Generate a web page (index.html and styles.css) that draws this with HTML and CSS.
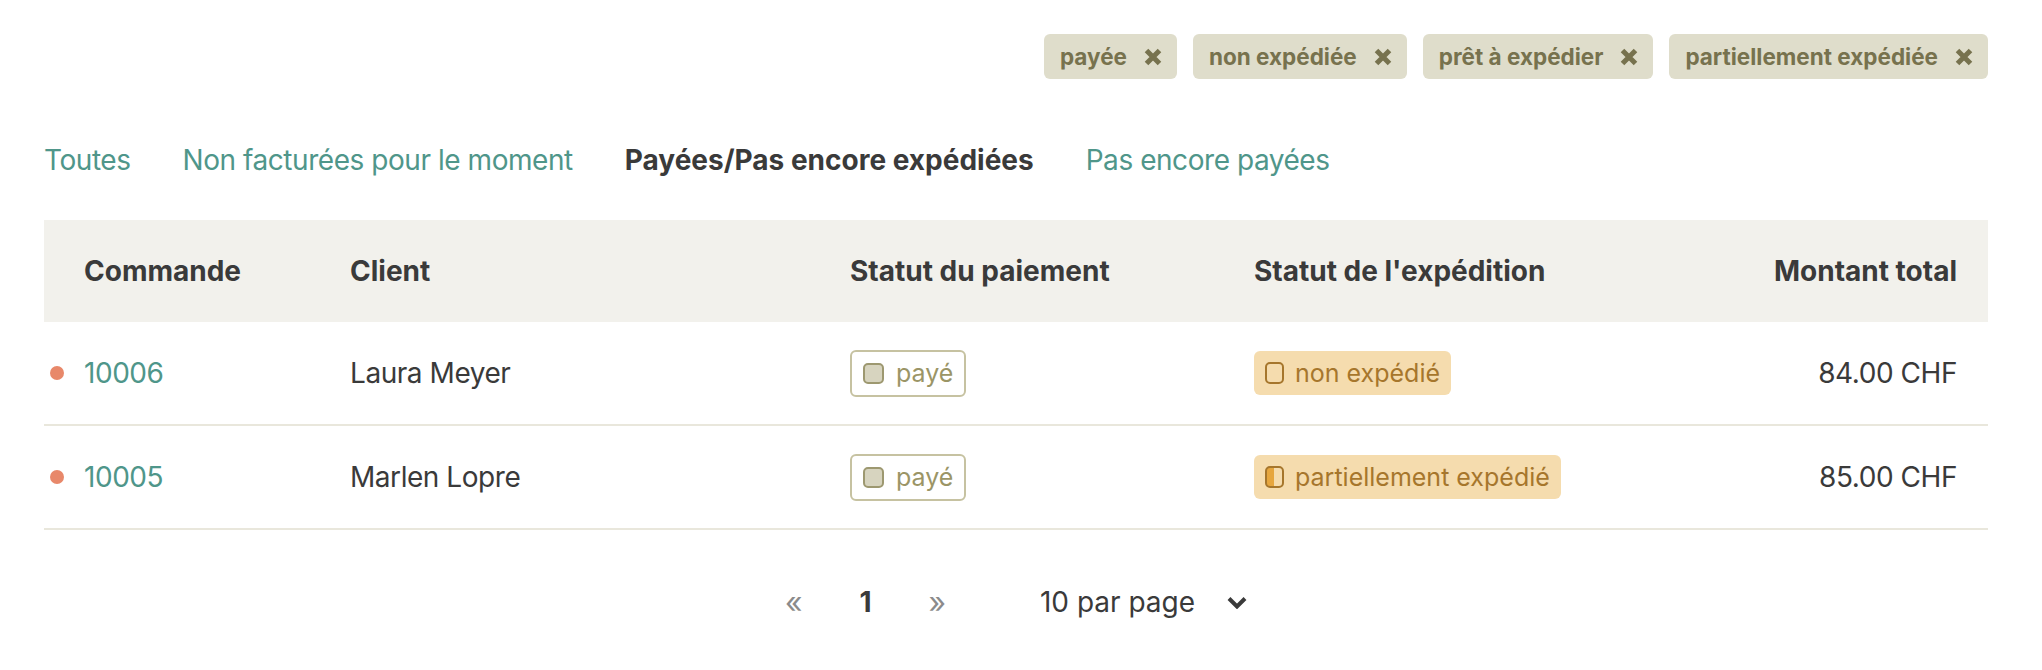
FILE: index.html
```html
<!DOCTYPE html>
<html lang="fr">
<head>
<meta charset="utf-8">
<title>Commandes</title>
<link rel="stylesheet" href="styles.css">
</head>
<body>
<div class="page">
  <div class="filters">
    <span class="chip">payée <svg class="x" viewBox="0 0 18 18"><path d="M2.5 2.5L15.5 15.5M15.5 2.5L2.5 15.5"/></svg></span>
    <span class="chip">non expédiée <svg class="x" viewBox="0 0 18 18"><path d="M2.5 2.5L15.5 15.5M15.5 2.5L2.5 15.5"/></svg></span>
    <span class="chip">prêt à expédier <svg class="x" viewBox="0 0 18 18"><path d="M2.5 2.5L15.5 15.5M15.5 2.5L2.5 15.5"/></svg></span>
    <span class="chip">partiellement expédiée <svg class="x" viewBox="0 0 18 18"><path d="M2.5 2.5L15.5 15.5M15.5 2.5L2.5 15.5"/></svg></span>
  </div>

  <nav class="tabs">
    <a class="tab" href="#">Toutes</a>
    <a class="tab" href="#">Non facturées pour le moment</a>
    <a class="tab active" href="#">Payées/Pas encore expédiées</a>
    <a class="tab" href="#">Pas encore payées</a>
  </nav>

  <div class="table">
    <div class="row head">
      <div class="cell">Commande</div>
      <div class="cell">Client</div>
      <div class="cell">Statut du paiement</div>
      <div class="cell">Statut de l'expédition</div>
      <div class="cell amount">Montant total</div>
    </div>
    <div class="row">
      <div class="cell order"><span class="dot"></span><a class="num" href="#">10006</a></div>
      <div class="cell">Laura Meyer</div>
      <div class="cell"><span class="badge paid"><span class="ico ico-paid"></span>payé</span></div>
      <div class="cell"><span class="badge ship"><span class="ico ico-ship"></span>non expédié</span></div>
      <div class="cell amount">84.00 CHF</div>
    </div>
    <div class="row">
      <div class="cell order"><span class="dot"></span><a class="num" href="#">10005</a></div>
      <div class="cell">Marlen Lopre</div>
      <div class="cell"><span class="badge paid"><span class="ico ico-paid"></span>payé</span></div>
      <div class="cell"><span class="badge ship"><span class="ico ico-ship half"></span>partiellement expédié</span></div>
      <div class="cell amount">85.00 CHF</div>
    </div>
  </div>

  <div class="pager">
    <span class="pg-arrow">«</span>
    <span class="pg-current">1</span>
    <span class="pg-arrow">»</span>
    <span class="per-page">10 par page</span>
    <svg class="chev" viewBox="0 0 20 13"><path d="M2 2.5L10 10.5L18 2.5"/></svg>
  </div>
</div>
</body>
</html>
```

FILE: styles.css
```css
* { box-sizing: content-box; }
body {
  margin: 0;
  background: #ffffff;
  color: #3a3a3a;
  font-family: Inter, "Noto Sans", "Liberation Sans", sans-serif;
}
.page {
  padding: 34px 54px 40px 44px;
}

/* filter chips */
.filters {
  display: flex;
  justify-content: flex-end;
  gap: 16px;
}
.chip {
  display: inline-flex;
  align-items: center;
  gap: 17px;
  height: 45px;
  padding: 0 15px 0 16px;
  border-radius: 6px;
  background: #dfddcb;
  color: #77724e;
  font-size: 22.5px;
  font-weight: 700;
}
.chip .x {
  width: 18px;
  height: 18px;
  fill: none;
  stroke: #77724e;
  stroke-width: 5;
}

/* tabs */
.tabs {
  display: flex;
  gap: 52px;
  margin-top: 64px;
  font-size: 28px;
  line-height: 34px;
}
.tab {
  color: #4f968a;
  text-decoration: none;
  letter-spacing: -0.45px;
}
.tab.active {
  color: #3a3a3a;
  font-weight: 700;
  letter-spacing: 0;
}

/* table */
.table {
  margin-top: 43px;
}
.row {
  display: grid;
  grid-template-columns: 266px 500px 404px 400px 1fr;
  align-items: center;
  height: 102px;
  border-bottom: 2px solid #e9e7dc;
  font-size: 28px;
  line-height: 34px;
  letter-spacing: -0.45px;
}
.row.head {
  background: #f2f1ec;
  font-weight: 700;
  border-bottom: 0;
  letter-spacing: 0;
}
.cell {
  padding-left: 40px;
  white-space: nowrap;
}
.cell.amount {
  padding-left: 0;
  padding-right: 31px;
  text-align: right;
}
.cell.order {
  display: flex;
  align-items: center;
  gap: 20px;
  padding-left: 6px;
}
.dot {
  width: 14px;
  height: 14px;
  border-radius: 50%;
  background: #e8886a;
}
.num {
  color: #4f968a;
  text-decoration: none;
}

/* badges */
.badge {
  display: inline-flex;
  align-items: center;
  border-radius: 6px;
  font-size: 25px;
  line-height: 30px;
  letter-spacing: 0;
  vertical-align: middle;
}
.badge.paid {
  height: 43px;
  gap: 12px;
  padding: 0 11px 0 11px;
  border: 2px solid #c6c2a1;
  color: #9b9566;
}
.badge.ship {
  height: 44px;
  gap: 11px;
  padding: 0 11px 0 11px;
  background: #f5dcae;
  color: #a6762c;
}
.ico {
  display: block;
  box-sizing: border-box;
  border-radius: 5px;
  border: 2px solid;
}
.ico-paid {
  width: 21px;
  height: 21px;
  border-color: #9d9870;
  background: #d7d4bf;
}
.ico-ship {
  width: 19px;
  height: 22px;
  border-color: #a6762c;
  background: transparent;
}
.ico-ship.half {
  background: linear-gradient(to right, #e6a63e 50%, transparent 50%);
}

/* pager */
.pager {
  display: flex;
  justify-content: center;
  align-items: center;
  margin-top: 55px;
  font-size: 28px;
  line-height: 34px;
}
.pg-arrow {
  color: #8b8b8b;
  font-size: 30px;
}
.pg-current {
  font-weight: 700;
  color: #3a3a3a;
  margin: 0 57px;
}
.per-page {
  margin-left: 94px;
  color: #3a3a3a;
}
.chev {
  width: 20px;
  height: 13px;
  margin-left: 32px;
  fill: none;
  stroke: #3a3a3a;
  stroke-width: 4;
}
```
